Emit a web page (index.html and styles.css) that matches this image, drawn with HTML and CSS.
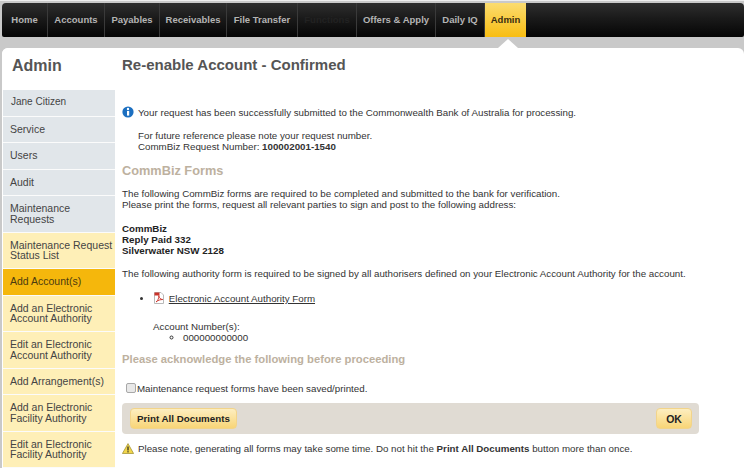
FILE: index.html
```html
<!DOCTYPE html>
<html lang="en">
<head>
<meta charset="utf-8">
<title>Re-enable Account - Confirmed</title>
<link rel="stylesheet" href="styles.css">
</head>
<body>
<div class="page">
  <nav class="topnav">
    <a class="tab" style="width:46px">Home</a>
    <a class="tab" style="width:57px">Accounts</a>
    <a class="tab" style="width:55px">Payables</a>
    <a class="tab" style="width:67px">Receivables</a>
    <a class="tab" style="width:71px">File Transfer</a>
    <a class="tab tab-dim" style="width:59px">Functions</a>
    <a class="tab" style="width:79px">Offers &amp; Apply</a>
    <a class="tab" style="width:49px">Daily IQ</a>
    <a class="tab tab-active" style="width:41px">Admin</a>
  </nav>
  <div class="notch-row"><span class="notch"></span></div>
  <div class="panel">
    <aside class="sidebar">
      <h2 class="side-title">Admin</h2>
      <ul class="side-list">
        <li class="side-item blue name">Jane Citizen</li>
        <li class="side-item blue">Service</li>
        <li class="side-item blue">Users</li>
        <li class="side-item blue">Audit</li>
        <li class="side-item blue">Maintenance<br>Requests</li>
        <li class="side-item cream">Maintenance Request<br>Status List</li>
        <li class="side-item current">Add Account(s)</li>
        <li class="side-item cream">Add an Electronic<br>Account Authority</li>
        <li class="side-item cream">Edit an Electronic<br>Account Authority</li>
        <li class="side-item cream">Add Arrangement(s)</li>
        <li class="side-item cream">Add an Electronic<br>Facility Authority</li>
        <li class="side-item cream">Edit an Electronic<br>Facility Authority</li>
      </ul>
    </aside>
    <main class="content">
      <h1 class="page-title">Re-enable Account - Confirmed</h1>
      <p class="notice">
        <svg class="ic" width="12" height="12" viewBox="0 0 12 12"><circle cx="6" cy="6" r="5.6" fill="#1c6fc0"/><circle cx="6" cy="3" r="1.2" fill="#fff"/><rect x="5" y="5" width="2.2" height="4.6" fill="#fff"/></svg>
        <span>Your request has been successfully submitted to the Commonwealth Bank of Australia for processing.</span>
      </p>
      <p class="ref">For future reference please note your request number.<br>CommBiz Request Number: <b>100002001-1540</b></p>
      <h3 class="sub first">CommBiz Forms</h3>
      <p class="para">The following CommBiz forms are required to be completed and submitted to the bank for verification.<br>Please print the forms, request all relevant parties to sign and post to the following address:</p>
      <p class="addr">CommBiz<br>Reply Paid 332<br>Silverwater NSW 2128</p>
      <p class="para auth">The following authority form is required to be signed by all authorisers defined on your Electronic Account Authority for the account.</p>
      <ul class="forms">
        <li>
          <svg class="pdf" width="12" height="12" viewBox="0 0 11 12"><path d="M1 .5h6.5L10 3v8.500H1z" fill="#fff" stroke="#b9b9b9"/><path d="M1 .5h5v3H1z" fill="#c9332b"/><path d="M2.500 10c2-1.500 3-4 2.800-6.500 .3 2.500 1.500 3.800 4 4-2.500 0-4.800 .8-6.800 2.500z" fill="none" stroke="#c9332b" stroke-width=".9"/></svg>
          <a class="form-link">Electronic Account Authority Form</a>
        </li>
      </ul>
      <div class="acct">Account Number(s):
        <ul class="acct-list"><li>000000000000</li></ul>
      </div>
      <h3 class="sub ack">Please acknowledge the following before proceeding</h3>
      <label class="check"><input type="checkbox" class="box"><span>Maintenance request forms have been saved/printed.</span></label>
      <div class="actions">
        <button class="btn">Print All Documents</button>
        <button class="btn btn-ok">OK</button>
      </div>
      <p class="warn">
        <svg class="ic" width="12" height="11" viewBox="0 0 12 11"><path d="M6 .6 11.600 10.500H.4z" fill="#f2d64b" stroke="#9a8a2c" stroke-width=".7"/><rect x="5.400" y="3.500" width="1.200" height="4" fill="#222"/><rect x="5.400" y="8.200" width="1.200" height="1.200" fill="#222"/></svg>
        <span>Please note, generating all forms may take some time. Do not hit the <b>Print All Documents</b> button more than once.</span>
      </p>
    </main>
  </div>
</div>
</body>
</html>
```

FILE: styles.css
```css
* { box-sizing: border-box; }
html, body { margin: 0; padding: 0; }
body {
  width: 744px;
  height: 468px;
  overflow: hidden;
  background: #c9c9c9;
  font-family: "Liberation Sans", Arial, sans-serif;
  font-size: 9.750px;
  color: #333;
}
.page { padding: 3px 0 0 2px; border-top: 1px solid #eee; }
.topnav {
  display: flex;
  height: 34px;
  background: linear-gradient(#2e2e2e, #1a1a1a 45%, #050505);
  border-radius: 4px 4px 2px 2px;
  margin-top: -1px;
}
.tab {
  display: flex;
  align-items: center;
  justify-content: center;
  height: 34px;
  flex: none;
  border-right: 1px solid #3a3a3a;
  color: #b4b4b4;
  font-size: 9.500px;
  font-weight: bold;
  padding-bottom: 1px;
}
.tab-dim { color: #222; }
.tab-active {
  background: linear-gradient(#fbdc6f, #f8bd12);
  color: #3a2d10;
  border-right: 0;
}
.notch-row { height: 11px; display: flex; }
.notch {
  width: 0;
  height: 0;
  margin: 2px 0 0 496px;
  border-left: 10px solid transparent;
  border-right: 10px solid transparent;
  border-bottom: 9px solid #fff;
}
.panel {
  display: flex;
  height: 420px;
  background: #fff;
  border-radius: 6px 6px 0 0;
  overflow: hidden;
}
.sidebar { width: 113px; flex: none; padding-left: 1px; background: #fff; }
.side-title {
  margin: 0;
  height: 42px;
  padding: 8px 0 0 9px;
  font-size: 16px;
  line-height: 20px;
  font-weight: bold;
  color: #555;
}
.side-list { list-style: none; margin: 0; padding: 0; }
.side-item {
  padding: 7px 0 7.500px 7px;
  font-size: 10.500px;
  line-height: 10.500px;
  border-bottom: 1px solid #fbfbfb;
  color: #444;
  min-height: 26.500px;
}
.name { padding-left: 8px; font-size: 10px; }
.blue { background: #e1e6ea; }
.cream { background: #feefb7; }
.current { background: #f5b70c; color: #4a3a10; }
.content { flex: 1; padding: 8px 0 0 7px; min-width: 0; }
.page-title {
  margin: 0;
  font-size: 15px;
  line-height: 18px;
  font-weight: bold;
  color: #555;
}
.notice, .warn { display: flex; align-items: center; gap: 4px; margin: 0; color: #333; }
.notice { margin-top: 31px; height: 14px; }
.ic { flex: none; }
.ref { margin: 11px 0 0 16px; line-height: 11px; }
.sub { margin: 0; font-weight: bold; color: #bdb19f; font-size: 12.750px; line-height: 15px; }
.first { margin-top: 11px; }
.para { margin: 10px 0 0; line-height: 11px; }
.addr { margin: 13px 0 0; line-height: 11px; font-weight: bold; color: #222; }
.auth { margin-top: 12px; }
.forms { margin: 13px 0 0; padding: 0 0 0 31px; line-height: 12px; }
.pdf { vertical-align: -2px; margin-right: 1px; }
.form-link { color: #333; text-decoration: underline; }
.acct { margin: 16px 0 0 31px; line-height: 11px; }
.acct-list { margin: 0; padding: 0 0 0 30px; list-style: circle; }
.ack { margin-top: 9px; font-size: 11.250px; line-height: 14px; }
.check { display: flex; align-items: center; margin-top: 15px; height: 14px; }
.box {
  appearance: none;
  width: 10px;
  height: 10px;
  margin: 0 1px 0 4px;
  background: #e8e8e8;
  border: 1px solid #a8a8a8;
  border-radius: 2px;
}
.actions {
  display: flex;
  justify-content: space-between;
  align-items: center;
  width: 577px;
  height: 31px;
  margin-top: 8px;
  padding: 0 7px 0 8px;
  background: #e0dbd3;
  border-radius: 4px;
}
.btn {
  height: 21px;
  padding: 0 6px;
  font: bold 9.750px "Liberation Sans", Arial, sans-serif;
  color: #222;
  background: linear-gradient(#fdeec0, #f8d577);
  border: 1px solid #f2d48a;
  border-radius: 4px;
}
.btn-ok { width: 36px; padding: 0; font-size: 10.500px; }
.warn { margin-top: 8px; height: 12px; }
```
